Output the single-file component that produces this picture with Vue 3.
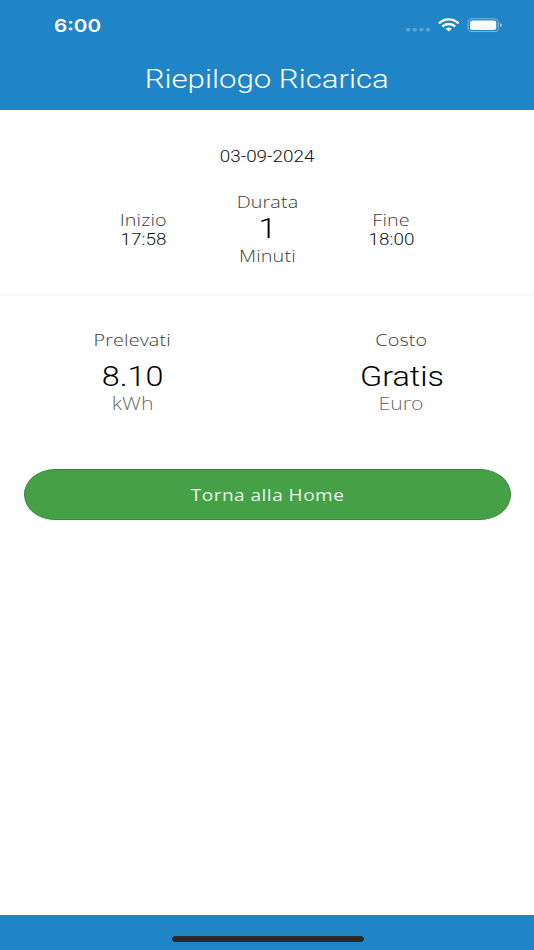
<script setup>
const totals = [
  { label: 'Prelevati', value: '8.10', unit: 'kWh' },
  { label: 'Costo', value: 'Gratis', unit: 'Euro' },
]
</script>

<template>
  <div class="screen">
    <header class="header">
      <div class="status">
        <span class="clock wide">6:00</span>
        <svg class="indicators" width="100" height="20" viewBox="0 0 100 20">
          <g fill="#fff" fill-opacity=".25">
            <rect x="1" y="13" width="4.2" height="3.4" rx="1.3" />
            <rect x="7.7" y="13" width="4.2" height="3.4" rx="1.3" />
            <rect x="14.3" y="13" width="4.2" height="3.4" rx="1.3" />
            <rect x="21" y="13" width="4.2" height="3.4" rx="1.3" />
          </g>
          <g fill="none" stroke="#fff" stroke-width="2.4">
            <path d="M34 8.3C39.5 3 48 3 53.5 8.3" />
            <path d="M37.3 11.5C41 8.2 46.5 8.2 50.2 11.5" />
          </g>
          <path d="M40.6 13.7Q43.75 11.5 46.9 13.7L44.3 16Q43.75 16.4 43.2 16Z" fill="#fff" />
          <rect x="63.1" y="3.8" width="30.3" height="12.8" rx="4.2" ry="3.8" fill="none" stroke="#fff" stroke-opacity=".42" />
          <rect x="65" y="5.5" width="26.3" height="9.4" rx="2.7" ry="2.2" fill="#fff" />
          <path d="M95 8.1Q96.8 8.7 96.8 10.2T95 12.3Z" fill="#fff" fill-opacity=".5" />
        </svg>
      </div>
      <h1 class="title"><span class="wide">Riepilogo Ricarica</span></h1>
    </header>

    <main class="content">
      <section class="session">
        <div class="date"><span class="wide">03-09-2024</span></div>
        <div class="times">
          <div class="edge start">
            <div class="label"><span class="wide">Inizio</span></div>
            <div class="time"><span class="wide">17:58</span></div>
          </div>
          <div class="duration">
            <div class="label"><span class="wide">Durata</span></div>
            <div class="value"><span class="wide">1</span></div>
            <div class="label"><span class="wide">Minuti</span></div>
          </div>
          <div class="edge end">
            <div class="label"><span class="wide">Fine</span></div>
            <div class="time"><span class="wide">18:00</span></div>
          </div>
        </div>
      </section>

      <section class="totals">
        <div v-for="t in totals" :key="t.label" class="total">
          <div class="label"><span class="wide">{{ t.label }}</span></div>
          <div class="value"><span class="wide">{{ t.value }}</span></div>
          <div class="unit"><span class="wide">{{ t.unit }}</span></div>
        </div>
      </section>

      <button class="home" type="button"><span class="wide">Torna alla Home</span></button>
    </main>

    <footer class="footer"><div class="handle"></div></footer>
  </div>
</template>

<style>
body {
  margin: 0;
  background: #fff;
}
</style>

<style scoped>
.screen {
  display: flex;
  flex-direction: column;
  width: 534px;
  height: 950px;
  overflow: hidden;
  background: #fff;
  font-family: "Open Sans", sans-serif;
  text-align: center;
  white-space: nowrap;
}
.wide {
  display: inline-block;
  transform: scaleX(1.18);
}
.header {
  box-sizing: border-box;
  height: 110px;
  padding-top: 15px;
  background: #2085c7;
  color: #fff;
}
.status {
  display: flex;
  justify-content: space-between;
  height: 20px;
  padding: 0 29px 0 54px;
}
.clock {
  font: 600 17.5px/21px Inter, sans-serif;
  transform-origin: left;
}
.title {
  margin: 28px 0 0;
  font: 300 26px/32px Roboto, sans-serif;
}
.title .wide {
  transform: scaleX(1.2);
}
.content {
  flex: 1;
}
.session {
  box-sizing: border-box;
  height: 186px;
  padding-top: 37px;
  border-bottom: 2px solid #f8f8f8;
}
.date,
.time {
  font: 350 16px/20px Roboto, sans-serif;
  color: #111;
}
.times {
  display: grid;
  grid-template-columns: 124px 124px 124px;
  justify-content: center;
  padding-top: 23px;
}
.label {
  font-size: 17px;
  font-weight: 300;
  line-height: 24px;
  color: #3c3c3c;
}
.label .wide {
  letter-spacing: .1px;
  transform: scaleX(1.165);
}
.value {
  font: 350 27px/30px Roboto, sans-serif;
  color: #000;
}
.value .wide {
  transform: scaleX(1.2);
}
.edge {
  padding-top: 19px;
}
.edge .label {
  line-height: 22px;
}
.edge .time {
  line-height: 17px;
}
.totals {
  display: grid;
  grid-template-columns: 269px 269px;
  justify-content: center;
  padding-top: 32px;
}
.total .value {
  margin-top: 9px;
  line-height: 32px;
}
.unit {
  margin-top: -2px;
  font-size: 18px;
  font-weight: 300;
  line-height: 24px;
  color: #6c6c6c;
}
.home {
  display: block;
  width: 487px;
  height: 51px;
  margin: 54px 0 0 24px;
  padding: 0;
  border: 1px solid #37893b;
  border-radius: 31px / 25.5px;
  background: #45a047;
  color: #e8f3e8;
  font: 400 16px/50px "Open Sans", sans-serif;
}
.home .wide {
  letter-spacing: .4px;
  transform: scaleX(1.19);
}
.footer {
  display: flex;
  justify-content: center;
  align-items: flex-start;
  height: 35px;
  background: #2085c7;
}
.handle {
  width: 192px;
  height: 6px;
  margin: 21px 0 0 1px;
  border-radius: 4px / 3px;
  background: #292929;
}
</style>
